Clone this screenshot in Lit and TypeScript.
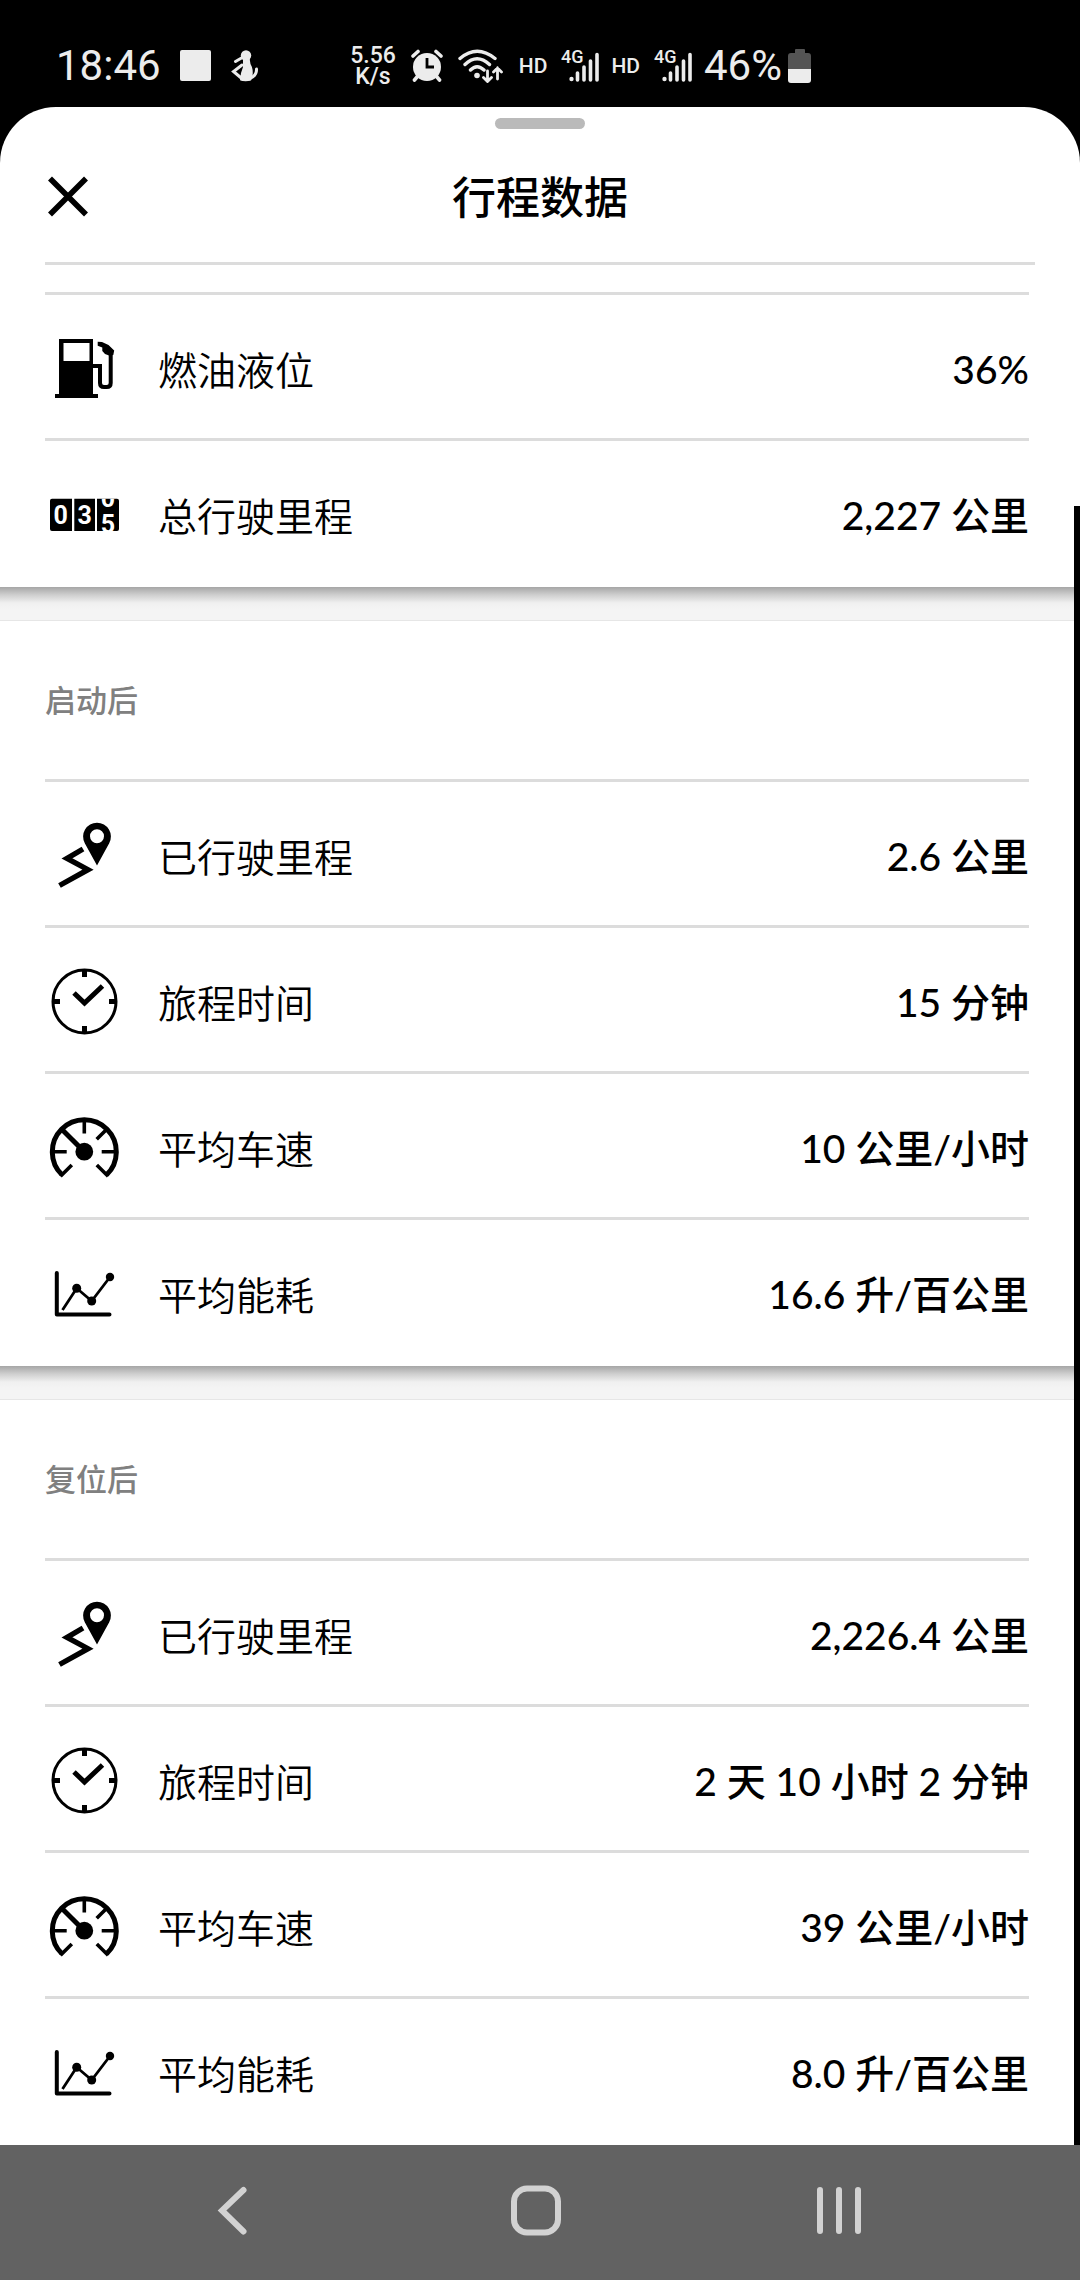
import { LitElement, html, svg, css } from "lit";
import { customElement, property } from "lit/decorators.js";

type IconName = "fuel" | "odometer" | "route" | "clock" | "gauge" | "chart";
interface Entry { icon: IconName; label: string; value: string; }
interface Group { title?: string; entries: Entry[]; }

const GROUPS: Group[] = [
  {
    entries: [
      { icon: "fuel", label: "燃油液位", value: "36%" },
      { icon: "odometer", label: "总行驶里程", value: "2,227 公里" },
    ],
  },
  {
    title: "启动后",
    entries: [
      { icon: "route", label: "已行驶里程", value: "2.6 公里" },
      { icon: "clock", label: "旅程时间", value: "15 分钟" },
      { icon: "gauge", label: "平均车速", value: "10 公里/小时" },
      { icon: "chart", label: "平均能耗", value: "16.6 升/百公里" },
    ],
  },
  {
    title: "复位后",
    entries: [
      { icon: "route", label: "已行驶里程", value: "2,226.4 公里" },
      { icon: "clock", label: "旅程时间", value: "2 天 10 小时 2 分钟" },
      { icon: "gauge", label: "平均车速", value: "39 公里/小时" },
      { icon: "chart", label: "平均能耗", value: "8.0 升/百公里" },
    ],
  },
];

const ICONS = {
  fuel: svg`
    <path fill-rule="evenodd" d="M14 10H48V65H53V69H10V65H14ZM18.5 14V32H44.5V14Z"/>
    <path d="M48 37H55V54Q55 58 59 58H61.7Q65.7 58 65.7 54V23" fill="none" stroke="#000" stroke-width="4"/>
    <path d="M52.7 12.7L57 13L63.5 16L69.2 21.6L68.3 26L64 26.5L60 25L57.3 22V18.5L52.7 16.8Z"/>`,
  odometer: svg`
    <path d="M7 23.7H27V56H7Q5 56 5 54V25.7Q5 23.7 7 23.7ZM29.3 23.7H50V56H29.3ZM52 23.7H72Q74 23.7 74 25.7V54Q74 56 72 56H52Z"/>
    <g class="digits">
      <text x="15.6" y="49">0</text>
      <text x="39.7" y="49">3</text>
      <svg x="52" y="23.7" width="22" height="32.3" overflow="hidden">
        <text x="11" y="8">0</text>
        <text x="11" y="34">5</text>
      </svg>
    </g>`,
  route: svg`
    <path fill-rule="evenodd" d="M52 49.5L39.8 27.2A13.9 13.9 0 1 1 64.2 27.2ZM52 13.3A7 7 0 1 0 52 27.3A7 7 0 1 0 52 13.3Z"/>
    <path d="M38 33L22 42.3L43 53.7L14.5 69.5" fill="none" stroke="#000" stroke-width="5.4"/>`,
  clock: svg`
    <circle cx="39.5" cy="39.5" r="31.5" fill="none" stroke="#000" stroke-width="3"/>
    <path d="M39.5 7V15M39.5 64V72M7 39.5H15M64 39.5H72" stroke="#000" stroke-width="5"/>
    <path d="M29 31L39.5 41L57.5 24" fill="none" stroke="#000" stroke-width="5"/>`,
  gauge: svg`
    <path d="M17 66.8A32 32 0 1 1 61.6 66.8" fill="none" stroke="#000" stroke-width="5"/>
    <path d="M39.3 10V25.5M56.7 43.7H72M6.5 43.7H21.7M62 21L51.7 31.3M15.5 68.3L26.8 57M63.1 68.3L51.8 57" stroke="#000" stroke-width="3.6"/>
    <path d="M17.5 22L39.3 43.7" stroke="#000" stroke-width="5"/>
    <circle cx="39.3" cy="43.7" r="8.9"/>`,
  chart: svg`
    <path d="M11.8 19V60.6H64.5" fill="none" stroke="#000" stroke-width="4" stroke-linecap="round" stroke-linejoin="round"/>
    <path d="M17.5 56L31.7 34.3L46.7 47L65 23" fill="none" stroke="#000" stroke-width="2.8"/>
    <circle cx="31.7" cy="34.3" r="4.5"/><circle cx="46.7" cy="47" r="4.5"/><circle cx="65" cy="23" r="4.2"/>`,
};

@customElement("status-bar")
class StatusBar extends LitElement {
  static styles = css`
    :host {
      display: flex; align-items: center; justify-content: space-between; box-sizing: border-box;
      height: 107px; padding: 24px 268px 0 56px;
      background: #000; color: #ececec; font-family: Roboto, "Noto Sans", sans-serif;
    }
    .side { display: flex; align-items: center; }
    .left { gap: 19px; }
    .right { gap: 15px; }
    .big { font-size: 42px; line-height: 42px; }
    .rate { display: flex; flex-direction: column; align-items: center; font-size: 23px; line-height: 21px; font-weight: 500; }
    .hd { font-size: 21px; line-height: 24px; font-weight: 500; }
    .signals { display: flex; align-items: center; gap: 12px; }
    .net { font-size: 18px; font-weight: 500; fill: #ececec; }
    .battery { display: flex; align-items: center; gap: 6px; }
    svg { display: block; fill: #ececec; }
  `;

  private signal() {
    return html`<svg width="40" height="44" viewBox="0 -5 40 44" aria-hidden="true">
      <text class="net" x="2" y="14">4G</text>
      <circle cx="12.5" cy="30" r="2.2"/>
      <path d="M18.5 24V31M25 18V31M31.500 12V31M38 5.500V31" stroke="#ececec" stroke-width="3.600" stroke-linecap="round"/>
    </svg>`;
  }

  render() {
    return html`
      <div class="side left">
        <time class="big">18:46</time>
        <svg width="32" height="34" viewBox="0 0 32 34" aria-hidden="true"><rect y="1" width="31" height="31" rx="2"/></svg>
        <svg width="28" height="34" viewBox="0 0 28 34" aria-hidden="true">
          <circle cx="15" cy="6.5" r="5.2"/>
          <path d="M12 9H18.500L19.500 15Q22.500 20 21.500 27L20 31.500Q14 33 9 31.300L10 24L12 18Z"/>
          <path d="M10.500 9L4.500 12.500M11 16L2.500 22.500L12 30.500M18 30Q26 27 25.500 20" fill="none" stroke="#ececec" stroke-width="3" stroke-linecap="round"/>
        </svg>
      </div>
      <div class="side right">
        <div class="rate"><span>5.56</span><span>K/s</span></div>
        <svg width="32" height="34" viewBox="0 0 32 34" aria-hidden="true">
          <circle cx="16" cy="18" r="14"/>
          <path d="M2 7L7 2.500M30 7L25 2.500M6 28L3.500 31M26 28L28.500 31" stroke="#ececec" stroke-width="3.600" stroke-linecap="round"/>
          <path d="M16 9V18H23" fill="none" stroke="#000" stroke-width="2.800"/>
        </svg>
        <svg width="46" height="34" viewBox="0 0 46 34" aria-hidden="true">
          <path d="M2 9.500Q19 -5 37 9.500M7 15.500Q19 4 31.500 15.500M12.500 21Q19 14.500 26 21" fill="none" stroke="#ececec" stroke-width="3.400" stroke-linecap="round"/>
          <circle cx="19" cy="26.500" r="2.800"/>
          <path d="M29.500 22V32M25.500 28.500L29.500 32.500L33.500 28.500M39.500 30V19M35.500 23L39.500 19L43.500 23" fill="none" stroke="#ececec" stroke-width="2.800" stroke-linecap="round"/>
        </svg>
        <div class="signals">
          <span class="hd">HD</span>${this.signal()}<span class="hd">HD</span>${this.signal()}
          <div class="battery">
            <span class="big">46%</span>
            <svg width="24" height="36" viewBox="0 0 24 36" aria-hidden="true">
              <path d="M7 5V2Q7 1 8 1H16Q17 1 17 2V5H20Q23 5 23 8V21H0V8Q0 5 3 5Z" fill="#545454"/>
              <path d="M0 21H23V32Q23 35 20 35H3Q0 35 0 32Z"/>
            </svg>
          </div>
        </div>
      </div>`;
  }
}

@customElement("trip-group")
class TripGroup extends LitElement {
  @property({ attribute: false }) group!: Group;

  static styles = css`
    :host { display: block; background: #fff; padding: 0 45px 3px; }
    .title {
      display: flex; align-items: center; box-sizing: border-box; height: 158px; margin: 0; padding-bottom: 2px;
      font-size: 31px; line-height: 44px; font-weight: 500; color: #808080;
    }
    .list { margin: 0; }
    .row {
      display: grid; grid-template-columns: 78px auto 1fr; align-items: center; column-gap: 35px;
      box-sizing: border-box; height: 146px; padding-top: 3px; border-top: 3px solid #dcdcdc;
      font-size: 39px; line-height: 56px;
    }
    .label { font-weight: 350; }
    .value { margin: 0; padding-top: 2px; font-family: Lato, "Noto Sans CJK SC", sans-serif; font-weight: 500; text-align: right; }
    .icon { display: block; width: 78px; height: 78px; }
    .digits { font: 700 25px "Liberation Sans Narrow", Roboto, sans-serif; fill: #fff; text-anchor: middle; }
  `;

  render() {
    const { title, entries } = this.group;
    return html`
      ${title ? html`<h2 class="title">${title}</h2>` : null}
      <dl class="list">
        ${entries.map((e) => html`
          <div class="row">
            <svg class="icon" viewBox="0 0 78 78" aria-hidden="true">${ICONS[e.icon]}</svg>
            <dt class="label">${e.label}</dt>
            <dd class="value">${e.value}</dd>
          </div>`)}
      </dl>`;
  }
}

@customElement("nav-bar")
class NavBar extends LitElement {
  static styles = css`
    :host { display: block; background: #626262; }
    .keys { display: grid; grid-template-columns: repeat(3, 1fr); box-sizing: border-box; height: 135px; padding: 0 90px 3px 81px; }
    .key { display: grid; place-items: center; margin: 0; padding: 0; border: 0; background: none; }
    svg { display: block; fill: none; stroke: #d2d2d2; stroke-width: 6; stroke-linecap: round; }
  `;

  render() {
    return html`<nav class="keys">
      <button class="key" aria-label="返回"><svg width="52" height="52" viewBox="0 0 52 52"><path d="M36.500 5L15 25.500L36.500 46.500"/></svg></button>
      <button class="key" aria-label="主屏幕"><svg width="52" height="52" viewBox="0 0 52 52"><rect x="4" y="3.500" width="44" height="44" rx="13"/></svg></button>
      <button class="key" aria-label="最近任务"><svg width="52" height="52" viewBox="0 0 52 52"><path d="M7 5V46M26 5V46M45 5V46"/></svg></button>
    </nav>`;
  }
}

@customElement("app-root")
class AppRoot extends LitElement {
  static styles = css`
    :host {
      display: flex; flex-direction: column; min-height: 100vh; background: #000; color: #000;
      font-family: "Noto Sans CJK SC", sans-serif;
    }
    .sheet { flex: 1; display: flex; flex-direction: column; background: #fff; border-radius: 56px 56px 0 0; }
    .handle { width: 90px; height: 11px; margin: 11px auto 0; border-radius: 6px; background: #bababa; }
    .header {
      display: grid; grid-template-columns: 46px 1fr 46px; align-items: center; box-sizing: border-box;
      height: 136px; margin: 0 45px; border-bottom: 3px solid #dcdcdc;
    }
    .close { display: block; width: 46px; height: 46px; margin: 0; padding: 0; border: 0; background: none; }
    .heading { margin: 0; padding-bottom: 2px; font-size: 44px; line-height: 64px; font-weight: 500; text-align: center; }
    .scroller { flex: 1; display: grid; grid-template-columns: 1fr 6px; }
    .content { padding-top: 27px; }
    .divider {
      height: 33px; border-bottom: 1px solid #e6e6e6;
      background: linear-gradient(#a6a6a6, #cfcfcf 8px, #f0f0f0 16px, #f4f4f4 22px);
    }
    .track { display: flex; flex-direction: column; }
    .thumb { height: 87.2%; margin-top: auto; background: #000; }
  `;

  render() {
    return html`
      <status-bar></status-bar>
      <main class="sheet">
        <div class="handle"></div>
        <header class="header">
          <button class="close" aria-label="关闭">
            <svg width="46" height="46" viewBox="0 0 46 46"><path d="M5 5.500L41 41.500M41 5.500L5 41.500" stroke="#000" stroke-width="5.600"/></svg>
          </button>
          <h1 class="heading">行程数据</h1>
        </header>
        <div class="scroller">
          <div class="content">
            ${GROUPS.map((g, i) => html`${i ? html`<div class="divider"></div>` : null}<trip-group .group=${g}></trip-group>`)}
          </div>
          <div class="track"><div class="thumb"></div></div>
        </div>
      </main>
      <nav-bar></nav-bar>`;
  }
}
